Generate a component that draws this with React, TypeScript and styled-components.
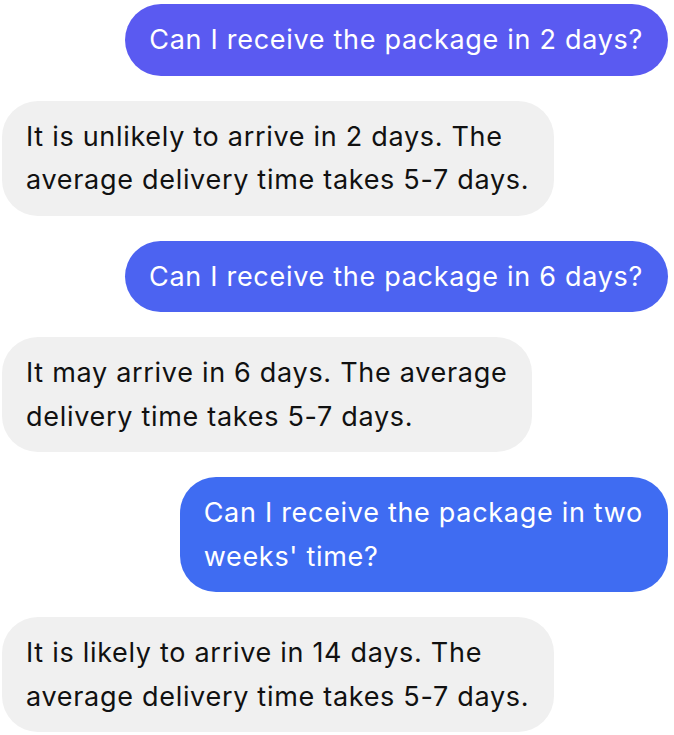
import React from 'react'
import styled, {createGlobalStyle} from 'styled-components'

const GlobalStyle = createGlobalStyle`
html, body {
  margin:0;
  padding:0;
  background:#fff;
}
body {
  font-family: Inter, "Noto Sans", "Liberation Sans", sans-serif;
  -webkit-font-smoothing: antialiased;
}
`

const Thread = styled.main`
display:flex;
flex-direction:column;
gap:25px;
padding:4px 6px 4px 2px;
`

const Row = styled.div<{$mine?: boolean}>`
display:flex;
justify-content:${p => (p.$mine ? 'flex-end' : 'flex-start')};
`

const Bubble = styled.div<{$bg: string; $mine?: boolean}>`
box-sizing:border-box;
padding:14px 25px 14px 24px;
border-radius:36px;
background:${p => p.$bg};
color:${p => (p.$mine ? '#fff' : '#111')};
font-size:27px;
line-height:43.5px;
letter-spacing:0.7px;
white-space:nowrap;
`

const Line = styled.span`
display:block;
`

type Message = {
  mine?: boolean;
  bg: string;
  lines: string[];
}

const messages: Message[] = [
  {mine: true, bg: '#5a5af1', lines: ['Can I receive the package in 2 days?']},
  {bg: '#f0f0f0', lines: ['It is unlikely to arrive in 2 days. The', 'average delivery time takes 5-7 days.']},
  {mine: true, bg: '#4c63f1', lines: ['Can I receive the package in 6 days?']},
  {bg: '#f0f0f0', lines: ['It may arrive in 6 days. The average', 'delivery time takes 5-7 days.']},
  {mine: true, bg: '#3f6cf2', lines: ['Can I receive the package in two', "weeks' time?"]},
  {bg: '#f0f0f0', lines: ['It is likely to arrive in 14 days. The', 'average delivery time takes 5-7 days.']},
]

const App = () => {
  return (
    <>
      <GlobalStyle />
      <Thread>
        {messages.map((m, i) => (
          <Row key={i} $mine={m.mine}>
            <Bubble $bg={m.bg} $mine={m.mine}>
              {m.lines.map((l, j) => <Line key={j}>{l}</Line>)}
            </Bubble>
          </Row>
        ))}
      </Thread>
    </>
  )
}

export default App
